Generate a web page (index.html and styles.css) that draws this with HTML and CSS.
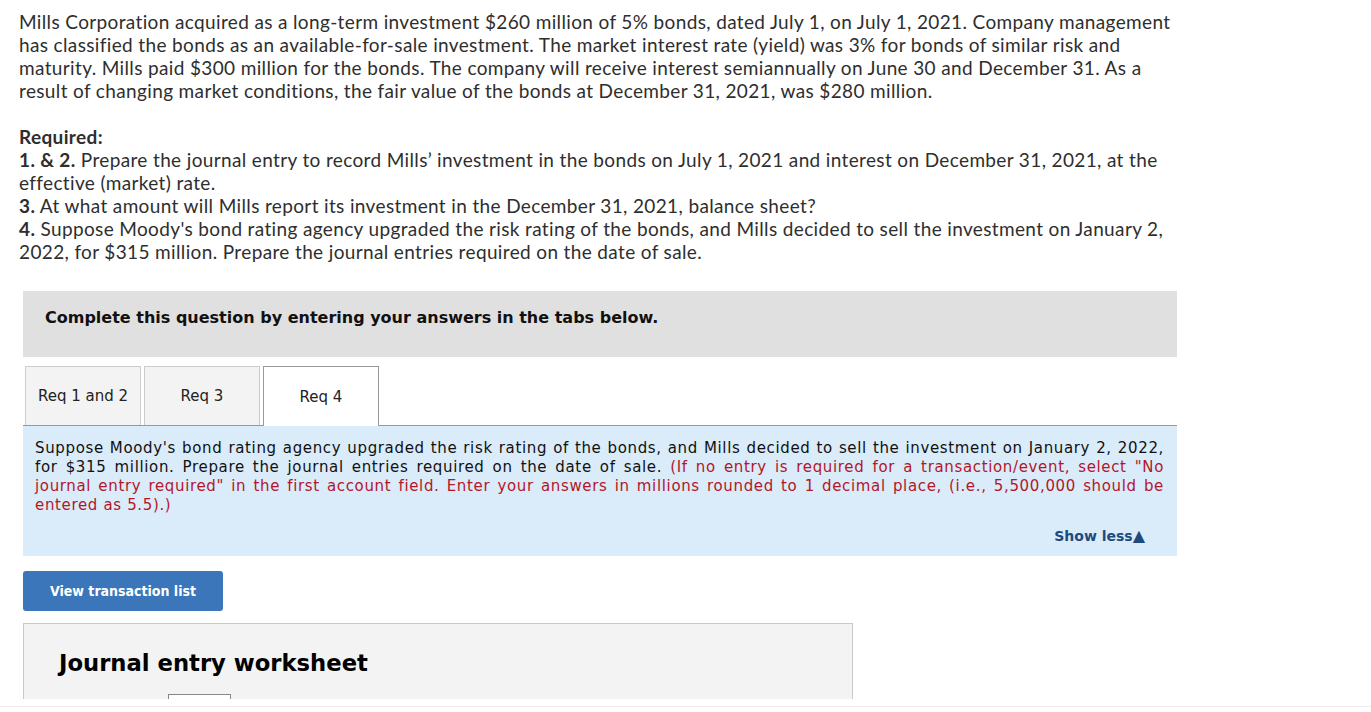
FILE: index.html
```
<!DOCTYPE html>
<html>
<head>
<meta charset="utf-8">
<link rel="stylesheet" href="styles.css">
</head>
<body>
<div class="page">
  <div class="question">
    <p class="intro">Mills Corporation acquired as a long-term investment $260 million of 5% bonds, dated July 1, on July 1, 2021. Company management has classified the bonds as an available-for-sale investment. The market interest rate (yield) was 3% for bonds of similar risk and maturity. Mills paid $300 million for the bonds. The company will receive interest semiannually on June 30 and December 31. As a result of changing market conditions, the fair value of the bonds at December 31, 2021, was $280 million.</p>
    <p class="required"><b>Required:</b><br>
    <b>1. &amp; 2.</b> Prepare the journal entry to record Mills’ investment in the bonds on July 1, 2021 and interest on December 31, 2021, at the effective (market) rate.<br>
    <b>3.</b> At what amount will Mills report its investment in the December 31, 2021, balance sheet?<br>
    <b>4.</b> Suppose Moody's bond rating agency upgraded the risk rating of the bonds, and Mills decided to sell the investment on January 2, 2022, for $315 million. Prepare the journal entries required on the date of sale.</p>
  </div>

  <div class="panel">
    <div class="banner">Complete this question by entering your answers in the tabs below.</div>
    <div class="tabs">
      <div class="tab">Req 1 and 2</div>
      <div class="tab">Req 3</div>
      <div class="tab active">Req 4</div>
    </div>
    <div class="info">
      <p class="info-text">Suppose Moody's bond rating agency upgraded the risk rating of the bonds, and Mills decided to sell the investment on January 2, 2022, for $315 million. Prepare the journal entries required on the date of sale. <span class="hint">(If no entry is required for a transaction/event, select "No journal entry required" in the first account field. Enter your answers in millions rounded to 1 decimal place, (i.e., 5,500,000 should be entered as 5.5).)</span></p>
      <div class="show-less">Show less<span class="tri">▲</span></div>
    </div>
    <button class="btn">View transaction list</button>
    <div class="worksheet">
      <h2 class="ws-title">Journal entry worksheet</h2>
      <div class="ws-nav"><div class="ws-box"></div></div>
    </div>
  </div>
</div>
<div class="footer-line"></div>
</body>
</html>
```

FILE: styles.css
```
html, body {
  margin: 0;
  padding: 0;
  background: #fff;
}
.page {
  height: 699px;
  overflow: hidden;
}
.question {
  padding: 10px 0 0 19px;
  width: 1168px;
  font-family: "Lato", "Open Sans", sans-serif;
  font-size: 19px;
  letter-spacing: 0.36px;
  line-height: 23px;
  color: #2e2e2e;
}
.intro {
  margin: 0;
}
.required {
  margin: 23px 0 0 0;
}
.required b {
  font-weight: 700;
}
.panel {
  margin: 28px 0 0 23px;
  width: 1154px;
  font-family: "DejaVu Sans", sans-serif;
  color: #111;
}
.banner {
  background: #e0e0e0;
  height: 66px;
  box-sizing: border-box;
  padding: 17px 0 0 22px;
  line-height: 20px;
  font-weight: bold;
  font-size: 16px;
}
.tabs {
  margin-top: 9px;
  display: flex;
  gap: 3px;
  padding-left: 2px;
  border-bottom: 1px solid #999;
  height: 59px;
}
.tab {
  width: 114px;
  height: 58px;
  border: 1px solid #ccc;
  border-bottom: none;
  background: #f3f3f3;
  display: flex;
  align-items: center;
  justify-content: center;
  font-size: 15px;
  color: #222;
}
.tab.active {
  background: #fff;
  border-color: #999;
  height: 59px;
  margin-bottom: -1px;
}
.info {
  background: #daebf9;
  padding: 13px 13px 12px 12px;
  height: 105px;
  display: flex;
  flex-direction: column;
}
.info-text {
  margin: 0;
  font-size: 15px;
  letter-spacing: 0.65px;
  line-height: 19px;
  text-align: justify;
  color: #111;
}
.hint {
  color: #b2172a;
}
.show-less {
  margin-top: auto;
  align-self: flex-end;
  margin-right: 19px;
  font-weight: bold;
  font-size: 14px;
  color: #1f4a7d;
}
.tri {
  font-size: 16px;
  line-height: 14px;
}
.btn {
  margin-top: 15px;
  width: 200px;
  height: 40px;
  background: #3a76b9;
  border: none;
  border-radius: 3px;
  color: #fff;
  font-family: "DejaVu Sans Condensed", "DejaVu Sans", sans-serif;
  font-weight: bold;
  font-size: 14px;
  display: block;
}
.worksheet {
  margin-top: 12px;
  width: 830px;
  box-sizing: border-box;
  background: #f3f3f3;
  border: 1px solid #c8c8c8;
  padding: 24px 0 0 35px;
  height: 140px;
}
.ws-title {
  margin: 0;
  font-size: 22.7px;
  line-height: 30px;
  font-weight: bold;
  color: #000;
}
.ws-nav {
  padding: 16px 0 0 109px;
}
.ws-box {
  width: 61px;
  height: 40px;
  border: 1px solid #888;
  background: #fff;
}
.footer-line {
  margin-top: 7px;
  height: 1px;
  background: #ececec;
}
```
